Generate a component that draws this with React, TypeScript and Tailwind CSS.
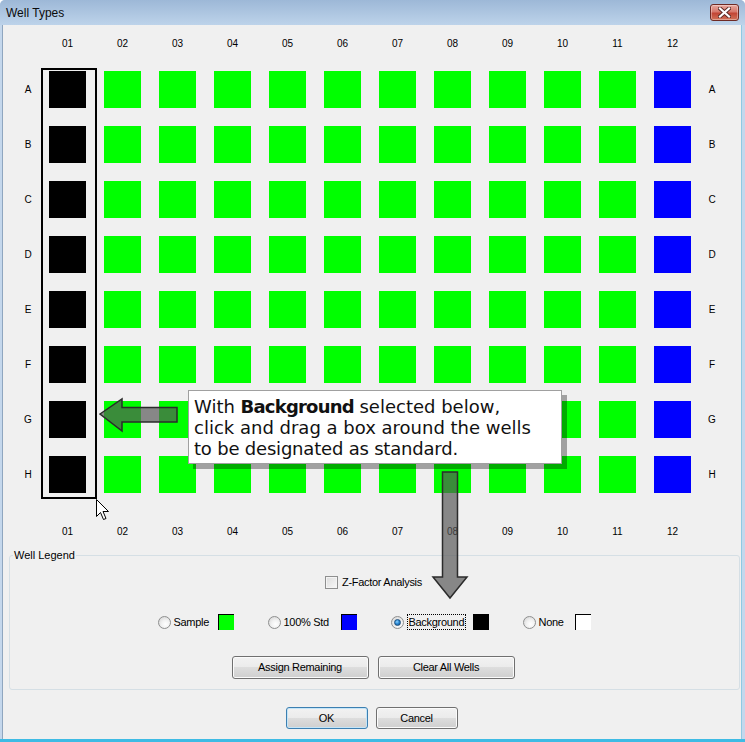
import React from "react";

const ROWS = ["A", "B", "C", "D", "E", "F", "G", "H"];
const COLS = ["01", "02", "03", "04", "05", "06", "07", "08", "09", "10", "11", "12"];

function wellColor(ci: number) {
  if (ci === 0) return "bg-black";
  if (ci === 11) return "bg-[#0000ff]";
  return "bg-[#00ff00]";
}

const lbl = "font-['Liberation_Sans',Arial,sans-serif] text-[10px] text-black leading-none";
const ui = "font-['Liberation_Sans',Arial,sans-serif] text-[11px] tracking-[-0.3px] text-black leading-none";

function ColLabels() {
  return (
    <div className="flex h-[26px] items-center">
      <div className="w-[36px]" />
      <div className="ml-[3px] flex gap-[18px]">
        {COLS.map((c) => (
          <div key={c} className={`w-[37px] text-center ${lbl}`}>
            {c}
          </div>
        ))}
      </div>
    </div>
  );
}

function Radio({ checked }: { checked?: boolean }) {
  return (
    <div className="flex h-[13px] w-[13px] items-center justify-center rounded-full border border-[#8e8f8f] bg-[radial-gradient(circle_at_60%_65%,#ffffff_0%,#f2f2f2_40%,#cfcfcf_100%)]">
      {checked && (
        <div className="h-[7px] w-[7px] rounded-full border border-[#1d4f7d] bg-[radial-gradient(circle_at_40%_35%,#8fd3ff_0%,#2d8bd6_45%,#0d4d8a_100%)]" />
      )}
    </div>
  );
}

function Btn({ children, w, primary }: { children: React.ReactNode; w: string; primary?: boolean }) {
  return (
    <div
      className={`flex items-center justify-center rounded-[3px] border ${w} ${
        primary
          ? "border-[#3c7fb1] shadow-[inset_0_0_0_1px_#c4e5f8]"
          : "border-[#707070] shadow-[inset_0_0_0_1px_#fbfbfb]"
      } bg-[linear-gradient(#f2f2f2_0%,#ebebeb_50%,#dddddd_50%,#cfcfcf_100%)] ${ui}`}
    >
      {children}
    </div>
  );
}

function LegendItem({
  label,
  labelW,
  swatch,
  checked,
}: {
  label: string;
  labelW: string;
  swatch: string;
  checked?: boolean;
}) {
  return (
    <div className="flex items-center">
      <Radio checked={checked} />
      <div className={`ml-[3px] ${labelW} ${ui}`}>
        {checked ? (
          <span className="border border-dotted border-black px-[1px] py-[1px]">{label}</span>
        ) : (
          <span>{label}</span>
        )}
      </div>
      <div className={`h-[16px] w-[16px] border-l border-t border-black ${swatch}`} />
    </div>
  );
}

export default function App() {
  return (
    <div className="relative h-[742px] w-[745px] overflow-hidden rounded-t-[5px] bg-[#c4d7ec]">
      {/* Title bar */}
      <div className="flex h-[25px] items-center justify-between bg-[linear-gradient(#9db8d7,#bdd3ea)] pl-[6px] pr-[6px]">
        <span className="font-['Liberation_Sans',Arial,sans-serif] text-[12px] text-[#0b0b0b]">Well Types</span>
        <div className="mb-[1px] flex h-[17px] w-[29px] items-center justify-center rounded-[3px] border border-[#6e2a24] bg-[linear-gradient(#e8a99f_0%,#d6776b_45%,#c24535_55%,#d1735a_100%)] shadow-[inset_0_0_0_1px_rgba(255,255,255,0.35)]">
          <svg width="13" height="11" viewBox="0 0 13 11">
            <path d="M2 1.5 L11 9.5 M11 1.5 L2 9.5" stroke="#5a2a25" strokeWidth="4" strokeLinecap="square" />
            <path d="M2 1.5 L11 9.5 M11 1.5 L2 9.5" stroke="#ffffff" strokeWidth="2.2" strokeLinecap="square" />
          </svg>
        </div>
      </div>

      {/* Body */}
      <div className="ml-[2px] mr-[4px] flex h-[714px] flex-col border-l border-[#8fa6bf] bg-[#f0f0f0]">
        {/* Plate */}
        <div className="flex flex-col pl-[7px] pt-[6px]">
          <ColLabels />
          <div className="mt-[14px] flex flex-col gap-[18px]">
            {ROWS.map((r) => (
              <div key={r} className="flex h-[37px] items-center">
                <div className={`w-[36px] text-center ${lbl}`}>{r}</div>
                <div className="ml-[3px] flex gap-[18px]">
                  {COLS.map((c, ci) => (
                    <div key={c} className={`h-[37px] w-[37px] ${wellColor(ci)}`} />
                  ))}
                </div>
                <div className={`ml-[3px] w-[36px] text-center ${lbl}`}>{r}</div>
              </div>
            ))}
          </div>
          <div className="mt-[26px]">
            <ColLabels />
          </div>
        </div>

        {/* Well Legend group */}
        <fieldset className="ml-[6px] mr-[1px] mt-[3px] rounded-[3px] border border-[#d5dfe5] pb-[10px]">
          <legend className={`ml-[3px] px-[1px] font-['Liberation_Sans',Arial,sans-serif] text-[11px] leading-[14px] text-black`}>
            Well Legend
          </legend>
          <div className="mt-[14px] flex items-center justify-center pr-[2px]">
            <div className="h-[13px] w-[13px] border border-[#8e8f8f] bg-[linear-gradient(135deg,#dcdcdc,#f8f8f8)] shadow-[inset_0_0_0_1px_#f4f4f4]" />
            <span className={`ml-[4px] ${ui}`}>Z-Factor Analysis</span>
          </div>
          <div className="mt-[25px] flex items-center justify-center gap-[34px] pr-[1px]">
            <LegendItem label="Sample" labelW="w-[44px]" swatch="bg-[#00ff00]" />
            <LegendItem label="100% Std" labelW="w-[57px]" swatch="bg-[#0000ff]" />
            <LegendItem label="Background" labelW="w-[66px]" swatch="bg-black" checked />
            <LegendItem label="None" labelW="w-[36px]" swatch="bg-white" />
          </div>
          <div className="mt-[26px] flex justify-center gap-[9px] pr-[3px]">
            <Btn w="w-[137px] h-[23px]">Assign Remaining</Btn>
            <Btn w="w-[137px] h-[23px]">Clear All Wells</Btn>
          </div>
        </fieldset>

        {/* OK / Cancel */}
        <div className="mt-[17px] flex justify-center gap-[8px] pr-[1px]">
          <Btn w="w-[82px] h-[22px]" primary>
            OK
          </Btn>
          <Btn w="w-[82px] h-[22px]">Cancel</Btn>
        </div>
      </div>
      <div className="h-[3px] bg-[#3ebbe4]" />

      {/* Right frame highlight */}
      <div className="absolute right-[3px] top-[25px] h-[714px] w-[1px] bg-[#8fc9e3]" />

      {/* Selection rectangle */}
      <div className="absolute left-[41px] top-[68px] h-[431px] w-[56px] border-2 border-black" />

      {/* Callout */}
      <div className="absolute left-[188px] top-[390px] h-[74px] w-[374px] border border-[#a0a0a0] bg-white pl-[5px] pt-[5px] font-['DejaVu_Sans',Verdana,sans-serif] text-[18px] leading-[21px] text-[#111] shadow-[5px_5px_0_rgba(0,0,0,0.33)]">
        <div>
          With <b className="tracking-[-0.8px]">Background</b> selected below,
        </div>
        <div>click and drag a box around the wells</div>
        <div className="tracking-[-0.2px]">to be designated as standard.</div>
      </div>

      {/* Arrows and cursor */}
      <svg className="pointer-events-none absolute left-0 top-0" width="745" height="742" viewBox="0 0 745 742">
        <polygon
          points="100,414 122,399 122,407.5 177,407.5 177,422 122,422 122,431"
          fill="rgba(85,85,85,0.68)"
          stroke="#2b2b2b"
          strokeWidth="1.5"
          strokeLinejoin="miter"
        />
        <polygon
          points="442.5,472 457.5,472 457.5,577 467,577 450,598 433,577 442.5,577"
          fill="rgba(85,85,85,0.68)"
          stroke="#2b2b2b"
          strokeWidth="1.5"
          strokeLinejoin="miter"
        />
        <path
          d="M96.5 499.5 L96.5 516.5 L100.5 512.5 L103.5 519.5 L106 518.5 L103 511.5 L108.5 511.5 Z"
          fill="#ffffff"
          stroke="#000000"
          strokeWidth="1"
        />
      </svg>
    </div>
  );
}
